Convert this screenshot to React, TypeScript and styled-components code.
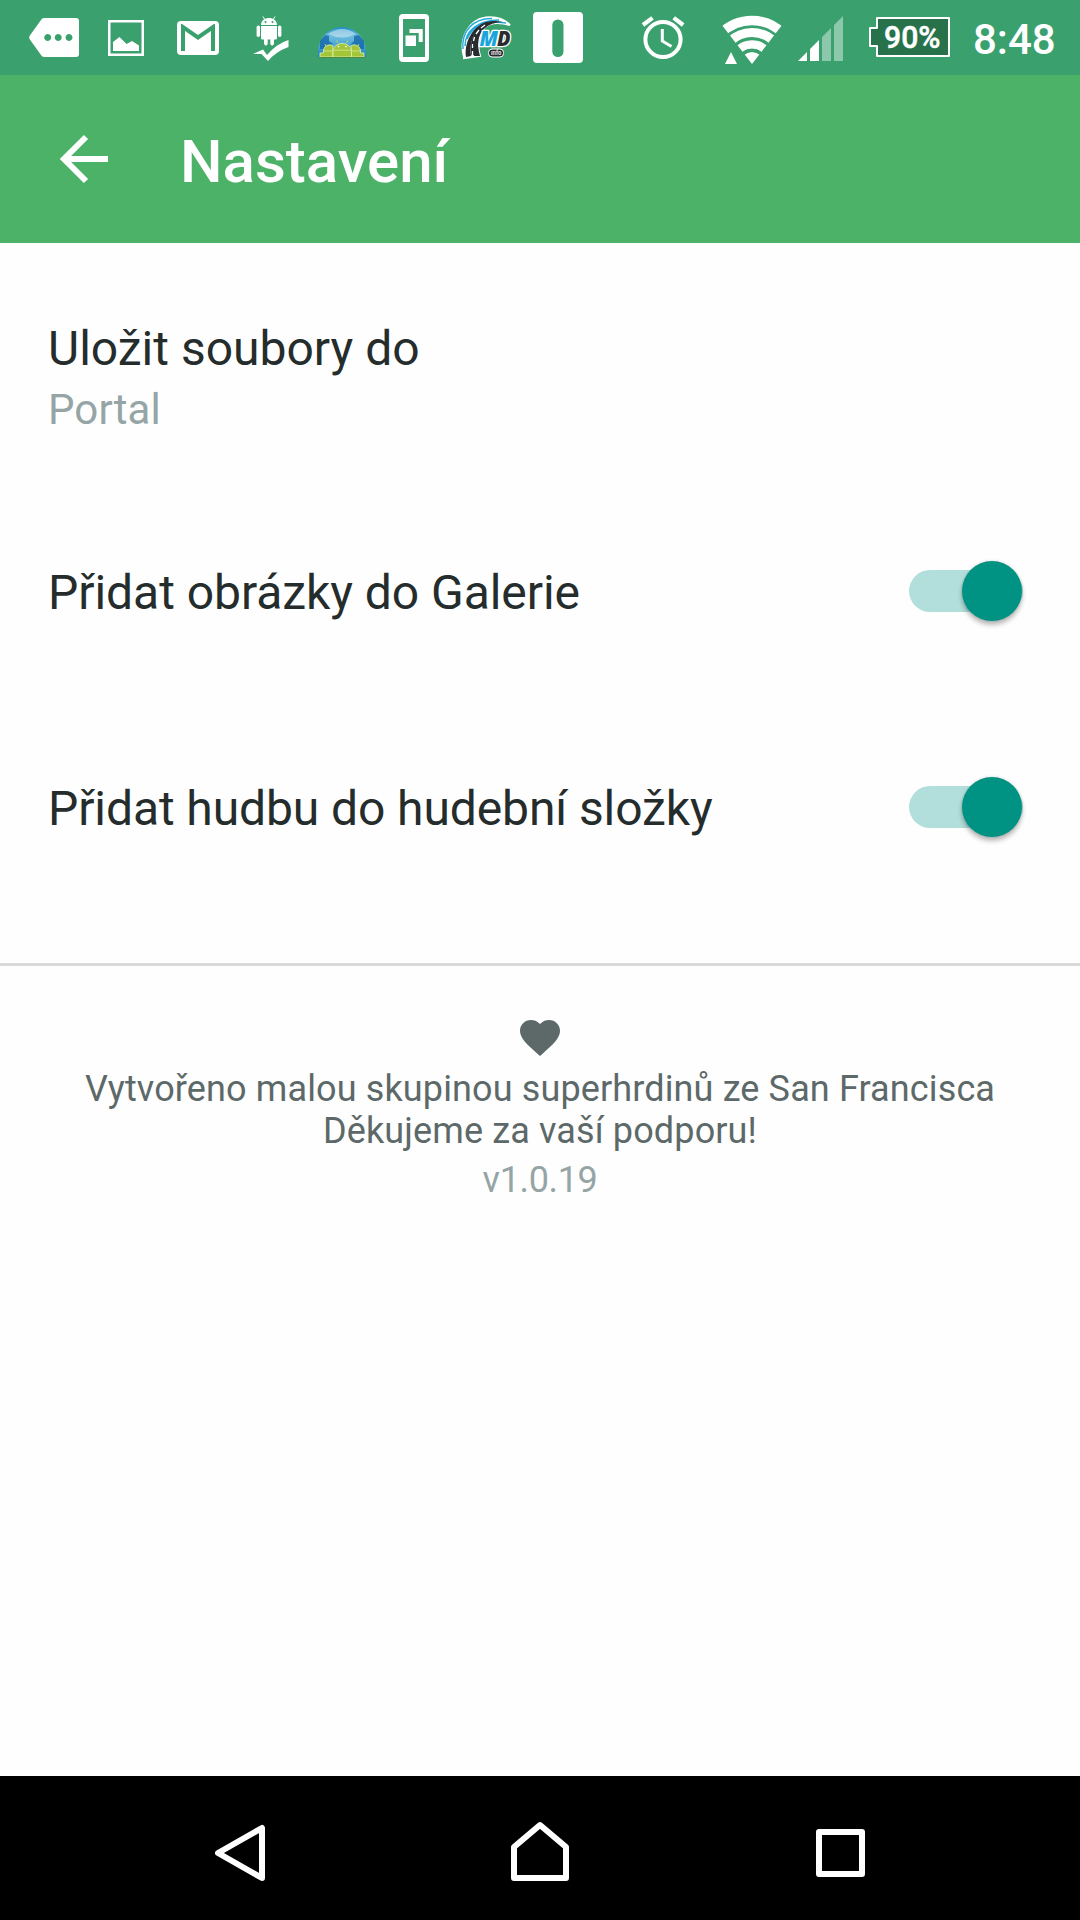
import React, { useState } from "react";
import styled, { createGlobalStyle } from "styled-components";

const GlobalStyle = createGlobalStyle`
  * { box-sizing: border-box; }
  html, body { margin: 0; padding: 0; background: #fefefe; }
  body { font-family: Roboto, "Noto Sans", sans-serif; }
`;

const Screen = styled.div`
  display: flex;
  flex-direction: column;
  width: 1080px;
  height: 1920px;
  overflow: hidden;
  background: #fefefe;
`;

const StatusBar = styled.header`
  display: flex;
  height: 75px;
  flex: none;
  padding-left: 18px;
  background: #3aa16e;
  color: #fff;
`;

const Notifications = styled.div`
  display: flex;
  width: 612px;
  flex: none;
`;

const SystemIcons = styled.div`
  display: flex;
  flex: none;
`;

const Glyph = styled.svg`
  display: block;
  flex: none;
  height: 75px;
`;

const Clock = styled.span`
  padding-left: 11px;
  font-size: 42px;
  font-weight: 500;
  line-height: 79px;
  white-space: nowrap;
`;

const AppBar = styled.div`
  display: flex;
  align-items: center;
  height: 168px;
  flex: none;
  padding-left: 48px;
  background: #4cb268;
`;

const IconButton = styled.button`
  display: flex;
  width: 72px;
  height: 72px;
  padding: 0;
  border: 0;
  background: none;
`;

const Title = styled.h1`
  margin: 5px 0 0 60px;
  color: #fff;
  font-size: 60px;
  font-weight: 500;
  line-height: 70px;
`;

const Settings = styled.main`
  display: flex;
  flex-direction: column;
  height: 723px;
  flex: none;
  border-bottom: 3px solid #d9d9d9;
`;

const FolderRow = styled.div`
  display: flex;
  flex-direction: column;
  gap: 8px;
  height: 239px;
  padding: 78px 48px 0;
`;

const SwitchRow = styled.div`
  display: flex;
  align-items: center;
  justify-content: space-between;
  height: 216px;
  padding: 0 57px 0 48px;
`;

const Label = styled.div<{ $nudge?: number; $tracking?: number }>`
  color: #252c2c;
  font-size: 48px;
  line-height: 56px;
  margin-top: ${({ $nudge = 0 }) => $nudge}px;
  letter-spacing: ${({ $tracking = 0 }) => $tracking}px;
`;

const Value = styled.div`
  color: #95a5a6;
  font-size: 42px;
  line-height: 49px;
  letter-spacing: 0.1px;
`;

const Track = styled.button<{ $on: boolean }>`
  position: relative;
  width: 114px;
  height: 42px;
  margin-top: 2px;
  padding: 0;
  border: 0;
  background: #b2dfdb;
  border-radius: 21px;
  opacity: ${({ $on }) => ($on ? 1 : 0.6)};
`;

const Thumb = styled.span<{ $on: boolean }>`
  position: absolute;
  top: -9.500px;
  ${({ $on }) => ($on ? "right: 1.500px" : "left: 0")};
  width: 60px;
  height: 60px;
  border-radius: 50%;
  background: #009384;
  box-shadow: 0 4px 5px rgba(0, 0, 0, 0.27), 0 0 3px rgba(0, 0, 0, 0.15);
`;

const Footer = styled.footer`
  display: flex;
  flex: 1;
  flex-direction: column;
  align-items: center;
  padding-top: 54px;
  color: #5d6969;
  font-size: 36px;
  line-height: 42px;
  text-align: center;
`;

const Heart = styled.svg`
  display: block;
  width: 40px;
  height: 36px;
  margin-bottom: 12px;
`;

const Credit = styled.div`
  letter-spacing: 0.13px;
`;

const Version = styled.div`
  margin-top: 7px;
  color: #95a5a6;
  letter-spacing: -0.35px;
`;

const NavBar = styled.nav`
  display: flex;
  justify-content: center;
  height: 144px;
  flex: none;
  background: #000;
`;

const NavIcon = styled.svg`
  display: block;
  width: 300px;
  height: 144px;
  fill: none;
  stroke: #fff;
  stroke-width: 6;
  stroke-linejoin: round;
`;

/* Notification glyphs share one coordinate space; each shows its own 72px cell. */
const Cell = ({ index, children }: { index: number; children: React.ReactNode }) => (
  <Glyph width={72} viewBox={`${18 + index * 72} 0 72 75`} fill="#fff">
    {children}
  </Glyph>
);

const MoreIcon = () => (
  <Cell index={0}>
    <path fillRule="evenodd" d="M44 18H76Q79 18 79 21V54Q79 57 76 57H44Q42 57 41 55L29.500 39Q29 37.500 29.500 36L41 20Q42 18 44 18ZM47.700 34a3.500 3.500 0 1 0 .01 0ZM58.200 34a3.500 3.500 0 1 0 .01 0ZM69 34a3.500 3.500 0 1 0 .01 0Z" />
  </Cell>
);

const PictureIcon = () => (
  <Cell index={1}>
    <path fillRule="evenodd" d="M108 20h36v36h-36ZM110.500 22.500v31h31v-31Z" />
    <path d="M113 51V42L119.500 37L126.500 44L132 41L139 45.500V51Z" />
  </Cell>
);

const MailIcon = () => (
  <Cell index={2}>
    <rect x="177" y="21" width="42" height="34" rx="4" />
    <path d="M183 51V27L198 37.500L213 27V51" fill="none" stroke="#3aa16e" strokeWidth="4" />
    <path d="M181 24H187L198 31.500L209 24H215V21H181Z" />
  </Cell>
);

const AndroidCheckIcon = () => (
  <Cell index={3}>
    <path fillRule="evenodd" d="M261 25C261 20.500 265 18 269 18S277 20.500 277 25ZM265.500 21a1 1 0 1 0 .01 0ZM272.500 21a1 1 0 1 0 .01 0Z" />
    <path d="M264.500 19L263 16.500M273.500 19L275 16.500" stroke="#fff" strokeWidth="1" />
    <path d="M261 26H277V38Q277 39.500 275.500 39.500H274V44Q272 47 270.300 44V39.500H267.700V44Q266 47 264 44V39.500H262.500Q261 39.500 261 38Z" />
    <rect x="256.600" y="25.500" width="3.400" height="11.500" rx="1.700" />
    <rect x="278" y="25.500" width="3.400" height="11.500" rx="1.700" />
    <path d="M253 54L263 49.500L267 55Q277 43.500 288.500 40V47Q276 51.500 268 61L261.500 54Z" />
  </Cell>
);

const DomeIcon = () => (
  <Cell index={4}>
    <defs>
      <linearGradient id="sky" x1="0" y1="0" x2="0" y2="1">
        <stop offset="0" stopColor="#1f8cc6" />
        <stop offset=".3" stopColor="#6fbde0" />
        <stop offset="1" stopColor="#1b84c2" />
      </linearGradient>
    </defs>
    <path d="M318 57V52A24 25 0 0 1 366 52V57Z" fill="url(#sky)" />
    <path d="M320 49V41L325 35L329 36V41L333 44V49ZM364 49V41L359 35L354 36V41L351 44V49Z" fill="#0f64a6" opacity=".75" />
    <path d="M328 34Q342 24 356 34Q342 41 328 34Z" fill="#c1e3f0" opacity=".65" />
    <g fill="#a3c639" stroke="#e2efb5" strokeWidth=".8">
      <path d="M323.500 53V50A6.500 6 0 0 1 333 45.500V57H320V53ZM360.500 53V50A6.500 6 0 0 0 351 45.500V57H364V53Z" />
      <path d="M333 57V50A9.500 8.500 0 0 1 351.500 50V57Z" />
    </g>
    <path d="M333 50.200H351.500M324 51H332M352 51H360" stroke="#d6e79a" strokeWidth=".8" />
    <path d="M338 43L336.500 40.500M346.500 43L348 40.500M326 46L325 44M358 46L359 44" stroke="#bcd667" strokeWidth="1" />
    <circle cx="338.500" cy="46.600" r=".8" />
    <circle cx="346" cy="46.600" r=".8" />
    <path d="M319 57.500H365" stroke="#4f8a3e" strokeWidth="1" />
  </Cell>
);

const PhoneWindowIcon = () => (
  <Cell index={5}>
    <path fillRule="evenodd" d="M403 14H425Q429 14 429 18V58Q429 62 425 62H403Q399 62 399 58V18Q399 14 403 14ZM403 19V57H425V19Z" />
    <path d="M409.500 29H422.700V42H418.700V33H409.500Z" />
    <rect x="405.500" y="35.500" width="10.500" height="10.500" />
  </Cell>
);

const RoadIcon = () => (
  <Cell index={6}>
    <path d="M464 57C459 39 468 20 486 17.500Q501 16 510 25Q493 20 485 27Q475 39 480 56L464 58Z" fill="#fff" stroke="#fff" strokeWidth="2" />
    <path d="M463 49C461 31 474 18 492 18.500M465 46C465 31 478 20 499 20M467 39C472 27 484 20 506 23" fill="none" stroke="#24a9dc" strokeWidth="1.500" />
    <path d="M466 57C464 43 472 27 486 22Q494 20 503 22Q491 22 484 29Q475 38 480 56L474 56C471 43 475 33 484 25C474 31 469 42 471 56Z" fill="#292b2e" />
    <path d="M473 55C470 41 477 30 486 24" fill="none" stroke="#292b2e" strokeWidth="3.500" />
    <path d="M472.500 55V51M472.500 48V44M473.500 41L474.500 37M476 34L479 30M481 28L485 25" fill="none" stroke="#fff" strokeWidth="1.300" />
    <g fontFamily="Open Sans" fontSize="20.500" fontWeight="800" fontStyle="italic" stroke="#fff" strokeWidth="2.600" paintOrder="stroke" strokeLinejoin="round">
      <text x="479.500" y="45.500" textLength="18.500" lengthAdjust="spacingAndGlyphs" fill="#18a5dc">M</text>
      <text x="497" y="45.500" textLength="13.500" lengthAdjust="spacingAndGlyphs" fill="#292b2e">D</text>
    </g>
    <rect x="488.500" y="49" width="15" height="8" rx="3.500" fill="#292b2e" stroke="#fff" strokeWidth="1" />
    <text x="491" y="55.300" fontFamily="Roboto" fontSize="7" fontWeight="700" textLength="10.500" lengthAdjust="spacingAndGlyphs" fill="#e3e3e3">info</text>
  </Cell>
);

const PillIcon = () => (
  <Cell index={7}>
    <path fillRule="evenodd" d="M537 12H579Q583 12 583 16V59Q583 63 579 63H537Q533 63 533 59V16Q533 12 537 12ZM552.300 25V51.500A5.600 5.600 0 0 0 563.500 51.500V25A5.600 5.600 0 0 0 552.300 25Z" />
  </Cell>
);

const AlarmIcon = () => (
  <Glyph width={72} viewBox="630 0 72 75" fill="none" stroke="#fff">
    <circle cx="663" cy="39.500" r="17.600" strokeWidth="4" />
    <path d="M643 25L652.500 17.800M683.200 25L673.700 17.800" strokeWidth="4.200" />
    <path d="M662.300 29V41L671.500 46.500" strokeWidth="3" />
  </Glyph>
);

const WifiIcon = () => (
  <Glyph width={84} viewBox="702 0 84 75" fill="#fff">
    <clipPath id="wifiFan"><path d="M752 64L718 20V8H786V20Z" /></clipPath>
    <g clipPath="url(#wifiFan)">
      <circle cx="752" cy="64" r="12" />
      <g fill="none" stroke="#fff">
        <circle cx="752" cy="64" r="19.500" strokeWidth="8.500" />
        <circle cx="752" cy="64" r="31.500" strokeWidth="9" />
        <circle cx="752" cy="64" r="43.500" strokeWidth="9.500" />
      </g>
      <circle cx="752" cy="64" r="13.600" fill="none" stroke="#3aa16e" strokeWidth="3.200" />
    </g>
    <path d="M725 64L731 52L737 64Z" />
  </Glyph>
);

const SignalIcon = () => (
  <Glyph width={70} viewBox="786 0 70 75" fill="#fff">
    <path d="M798 61L807 52V61ZM810 61V49L819 40V61Z" />
    <path d="M822 61V37L831 28V61ZM834 61V25L843 16V61Z" opacity=".42" />
  </Glyph>
);

const BatteryIcon = () => (
  <Glyph width={106} viewBox="856 0 106 75">
    <path d="M877 18H949V56H877V46H870V28H877Z" fill="#28724b" stroke="#fff" strokeWidth="2" strokeLinejoin="round" />
    <text x="884" y="47.800" fill="#fff" stroke="#fff" strokeWidth=".5" fontFamily="Roboto" fontSize="31.500" fontWeight="500" textLength="56.500" lengthAdjust="spacingAndGlyphs">90%</text>
  </Glyph>
);

const BackArrow = () => (
  <svg width="72" height="72" viewBox="48 123 72 72" fill="none" stroke="#fff" strokeWidth="6">
    <path d="M86 137L64 159L86 181M65 159H108" />
  </svg>
);

const Switch = ({ label }: { label: string }) => {
  const [on, setOn] = useState(true);
  return (
    <Track $on={on} role="switch" aria-checked={on} aria-label={label} onClick={() => setOn(!on)}>
      <Thumb $on={on} />
    </Track>
  );
};

const switches = [
  { label: "Přidat obrázky do Galerie", tracking: -0.05 },
  { label: "Přidat hudbu do hudební složky", tracking: -0.1 },
];

export default function App() {
  return (
    <Screen>
      <GlobalStyle />
      <StatusBar>
        <Notifications>
          <MoreIcon />
          <PictureIcon />
          <MailIcon />
          <AndroidCheckIcon />
          <DomeIcon />
          <PhoneWindowIcon />
          <RoadIcon />
          <PillIcon />
        </Notifications>
        <SystemIcons>
          <AlarmIcon />
          <WifiIcon />
          <SignalIcon />
          <BatteryIcon />
        </SystemIcons>
        <Clock>8:48</Clock>
      </StatusBar>
      <AppBar>
        <IconButton aria-label="Zpět">
          <BackArrow />
        </IconButton>
        <Title>Nastavení</Title>
      </AppBar>
      <Settings>
        <FolderRow>
          <Label>Uložit soubory do</Label>
          <Value>Portal</Value>
        </FolderRow>
        {switches.map(({ label, tracking }) => (
          <SwitchRow key={label}>
            <Label $nudge={5} $tracking={tracking}>{label}</Label>
            <Switch label={label} />
          </SwitchRow>
        ))}
      </Settings>
      <Footer>
        <Heart viewBox="2 3 20 18.350" preserveAspectRatio="none" fill="#5d6969">
          <path d="M12 21.350l-1.450-1.320C5.400 15.360 2 12.280 2 8.500 2 5.420 4.420 3 7.500 3c1.740 0 3.410.81 4.500 2.090C13.090 3.810 14.760 3 16.500 3 19.580 3 22 5.420 22 8.500c0 3.780-3.400 6.860-8.550 11.540L12 21.350z" />
        </Heart>
        <Credit>Vytvořeno malou skupinou superhrdinů ze San Francisca</Credit>
        <Credit>Děkujeme za vaší podporu!</Credit>
        <Version>v1.0.19</Version>
      </Footer>
      <NavBar>
        <NavIcon viewBox="90 1776 300 144">
          <path d="M218 1853L262 1828V1878Z" />
        </NavIcon>
        <NavIcon viewBox="390 1776 300 144">
          <path d="M514 1878V1847L540 1825L566 1847V1878Z" />
        </NavIcon>
        <NavIcon viewBox="690 1776 300 144">
          <path d="M819 1832H862V1874H819Z" />
        </NavIcon>
      </NavBar>
    </Screen>
  );
}
